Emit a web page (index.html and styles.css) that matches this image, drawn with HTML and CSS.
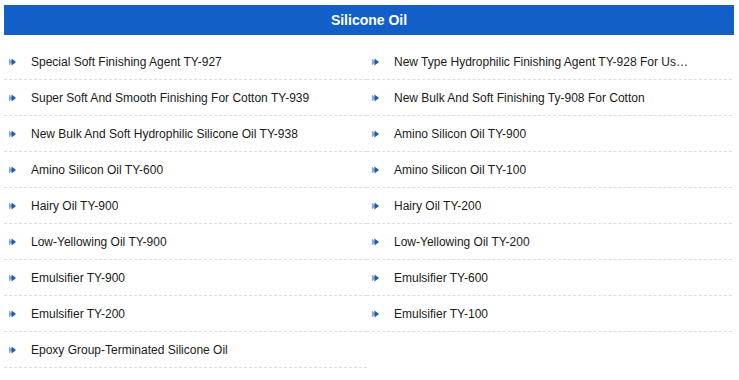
FILE: index.html
```html
<!DOCTYPE html>
<html>
<head>
<meta charset="utf-8">
<link rel="stylesheet" href="styles.css">
</head>
<body>
<div class="box">
  <h2 class="title">Silicone Oil</h2>
  <ul class="list">
    <li><span class="ico"><svg width="7" height="8" viewBox="0 0 7 8"><polygon points="0,0.5 3.5,4 0,7.5" fill="#86a9d6"/><polygon points="2.5,0.5 7,4 2.5,7.5" fill="#1d5aa5"/></svg></span><span class="txt">Special Soft Finishing Agent TY-927</span></li>
    <li><span class="ico"><svg width="7" height="8" viewBox="0 0 7 8"><polygon points="0,0.5 3.5,4 0,7.5" fill="#86a9d6"/><polygon points="2.5,0.5 7,4 2.5,7.5" fill="#1d5aa5"/></svg></span><span class="txt">New Type Hydrophilic Finishing Agent TY-928 For Use In Cotton</span></li>
    <li><span class="ico"><svg width="7" height="8" viewBox="0 0 7 8"><polygon points="0,0.5 3.5,4 0,7.5" fill="#86a9d6"/><polygon points="2.5,0.5 7,4 2.5,7.5" fill="#1d5aa5"/></svg></span><span class="txt">Super Soft And Smooth Finishing For Cotton TY-939</span></li>
    <li><span class="ico"><svg width="7" height="8" viewBox="0 0 7 8"><polygon points="0,0.5 3.5,4 0,7.5" fill="#86a9d6"/><polygon points="2.5,0.5 7,4 2.5,7.5" fill="#1d5aa5"/></svg></span><span class="txt">New Bulk And Soft Finishing Ty-908 For Cotton</span></li>
    <li><span class="ico"><svg width="7" height="8" viewBox="0 0 7 8"><polygon points="0,0.5 3.5,4 0,7.5" fill="#86a9d6"/><polygon points="2.5,0.5 7,4 2.5,7.5" fill="#1d5aa5"/></svg></span><span class="txt">New Bulk And Soft Hydrophilic Silicone Oil TY-938</span></li>
    <li><span class="ico"><svg width="7" height="8" viewBox="0 0 7 8"><polygon points="0,0.5 3.5,4 0,7.5" fill="#86a9d6"/><polygon points="2.5,0.5 7,4 2.5,7.5" fill="#1d5aa5"/></svg></span><span class="txt">Amino Silicon Oil TY-900</span></li>
    <li><span class="ico"><svg width="7" height="8" viewBox="0 0 7 8"><polygon points="0,0.5 3.5,4 0,7.5" fill="#86a9d6"/><polygon points="2.5,0.5 7,4 2.5,7.5" fill="#1d5aa5"/></svg></span><span class="txt">Amino Silicon Oil TY-600</span></li>
    <li><span class="ico"><svg width="7" height="8" viewBox="0 0 7 8"><polygon points="0,0.5 3.5,4 0,7.5" fill="#86a9d6"/><polygon points="2.5,0.5 7,4 2.5,7.5" fill="#1d5aa5"/></svg></span><span class="txt">Amino Silicon Oil TY-100</span></li>
    <li><span class="ico"><svg width="7" height="8" viewBox="0 0 7 8"><polygon points="0,0.5 3.5,4 0,7.5" fill="#86a9d6"/><polygon points="2.5,0.5 7,4 2.5,7.5" fill="#1d5aa5"/></svg></span><span class="txt">Hairy Oil TY-900</span></li>
    <li><span class="ico"><svg width="7" height="8" viewBox="0 0 7 8"><polygon points="0,0.5 3.5,4 0,7.5" fill="#86a9d6"/><polygon points="2.5,0.5 7,4 2.5,7.5" fill="#1d5aa5"/></svg></span><span class="txt">Hairy Oil TY-200</span></li>
    <li><span class="ico"><svg width="7" height="8" viewBox="0 0 7 8"><polygon points="0,0.5 3.5,4 0,7.5" fill="#86a9d6"/><polygon points="2.5,0.5 7,4 2.5,7.5" fill="#1d5aa5"/></svg></span><span class="txt">Low-Yellowing Oil TY-900</span></li>
    <li><span class="ico"><svg width="7" height="8" viewBox="0 0 7 8"><polygon points="0,0.5 3.5,4 0,7.5" fill="#86a9d6"/><polygon points="2.5,0.5 7,4 2.5,7.5" fill="#1d5aa5"/></svg></span><span class="txt">Low-Yellowing Oil TY-200</span></li>
    <li><span class="ico"><svg width="7" height="8" viewBox="0 0 7 8"><polygon points="0,0.5 3.5,4 0,7.5" fill="#86a9d6"/><polygon points="2.5,0.5 7,4 2.5,7.5" fill="#1d5aa5"/></svg></span><span class="txt">Emulsifier TY-900</span></li>
    <li><span class="ico"><svg width="7" height="8" viewBox="0 0 7 8"><polygon points="0,0.5 3.5,4 0,7.5" fill="#86a9d6"/><polygon points="2.5,0.5 7,4 2.5,7.5" fill="#1d5aa5"/></svg></span><span class="txt">Emulsifier TY-600</span></li>
    <li><span class="ico"><svg width="7" height="8" viewBox="0 0 7 8"><polygon points="0,0.5 3.5,4 0,7.5" fill="#86a9d6"/><polygon points="2.5,0.5 7,4 2.5,7.5" fill="#1d5aa5"/></svg></span><span class="txt">Emulsifier TY-200</span></li>
    <li><span class="ico"><svg width="7" height="8" viewBox="0 0 7 8"><polygon points="0,0.5 3.5,4 0,7.5" fill="#86a9d6"/><polygon points="2.5,0.5 7,4 2.5,7.5" fill="#1d5aa5"/></svg></span><span class="txt">Emulsifier TY-100</span></li>
    <li><span class="ico"><svg width="7" height="8" viewBox="0 0 7 8"><polygon points="0,0.5 3.5,4 0,7.5" fill="#86a9d6"/><polygon points="2.5,0.5 7,4 2.5,7.5" fill="#1d5aa5"/></svg></span><span class="txt">Epoxy Group-Terminated Silicone Oil</span></li>
  </ul>
</div>
</body>
</html>
```

FILE: styles.css
```css
html, body {
  margin: 0;
  padding: 0;
  background: #fff;
}
body {
  font-family: "Liberation Sans", Arial, sans-serif;
}
.box {
  width: 730px;
  margin: 5px 0 0 4px;
}
.title {
  margin: 0;
  height: 30px;
  line-height: 30px;
  background: #135fc8;
  color: #fff;
  font-size: 14px;
  font-weight: bold;
  text-align: center;
}
.list {
  list-style: none;
  margin: 9px 0 0 0;
  padding: 0;
  width: 728px;
  display: grid;
  grid-template-columns: 363px 365px;
}
.list li {
  height: 35px;
  border-bottom: 1px dashed #dcdcdc;
  display: flex;
  align-items: center;
  padding-left: 5px;
  font-size: 12px;
  color: #1a1a1a;
  overflow: hidden;
}
.ico {
  width: 7px;
  height: 8px;
  display: flex;
  margin-right: 15px;
  flex: none;
}
.txt {
  max-width: 296px;
  white-space: nowrap;
  overflow: hidden;
  text-overflow: ellipsis;
}
```
